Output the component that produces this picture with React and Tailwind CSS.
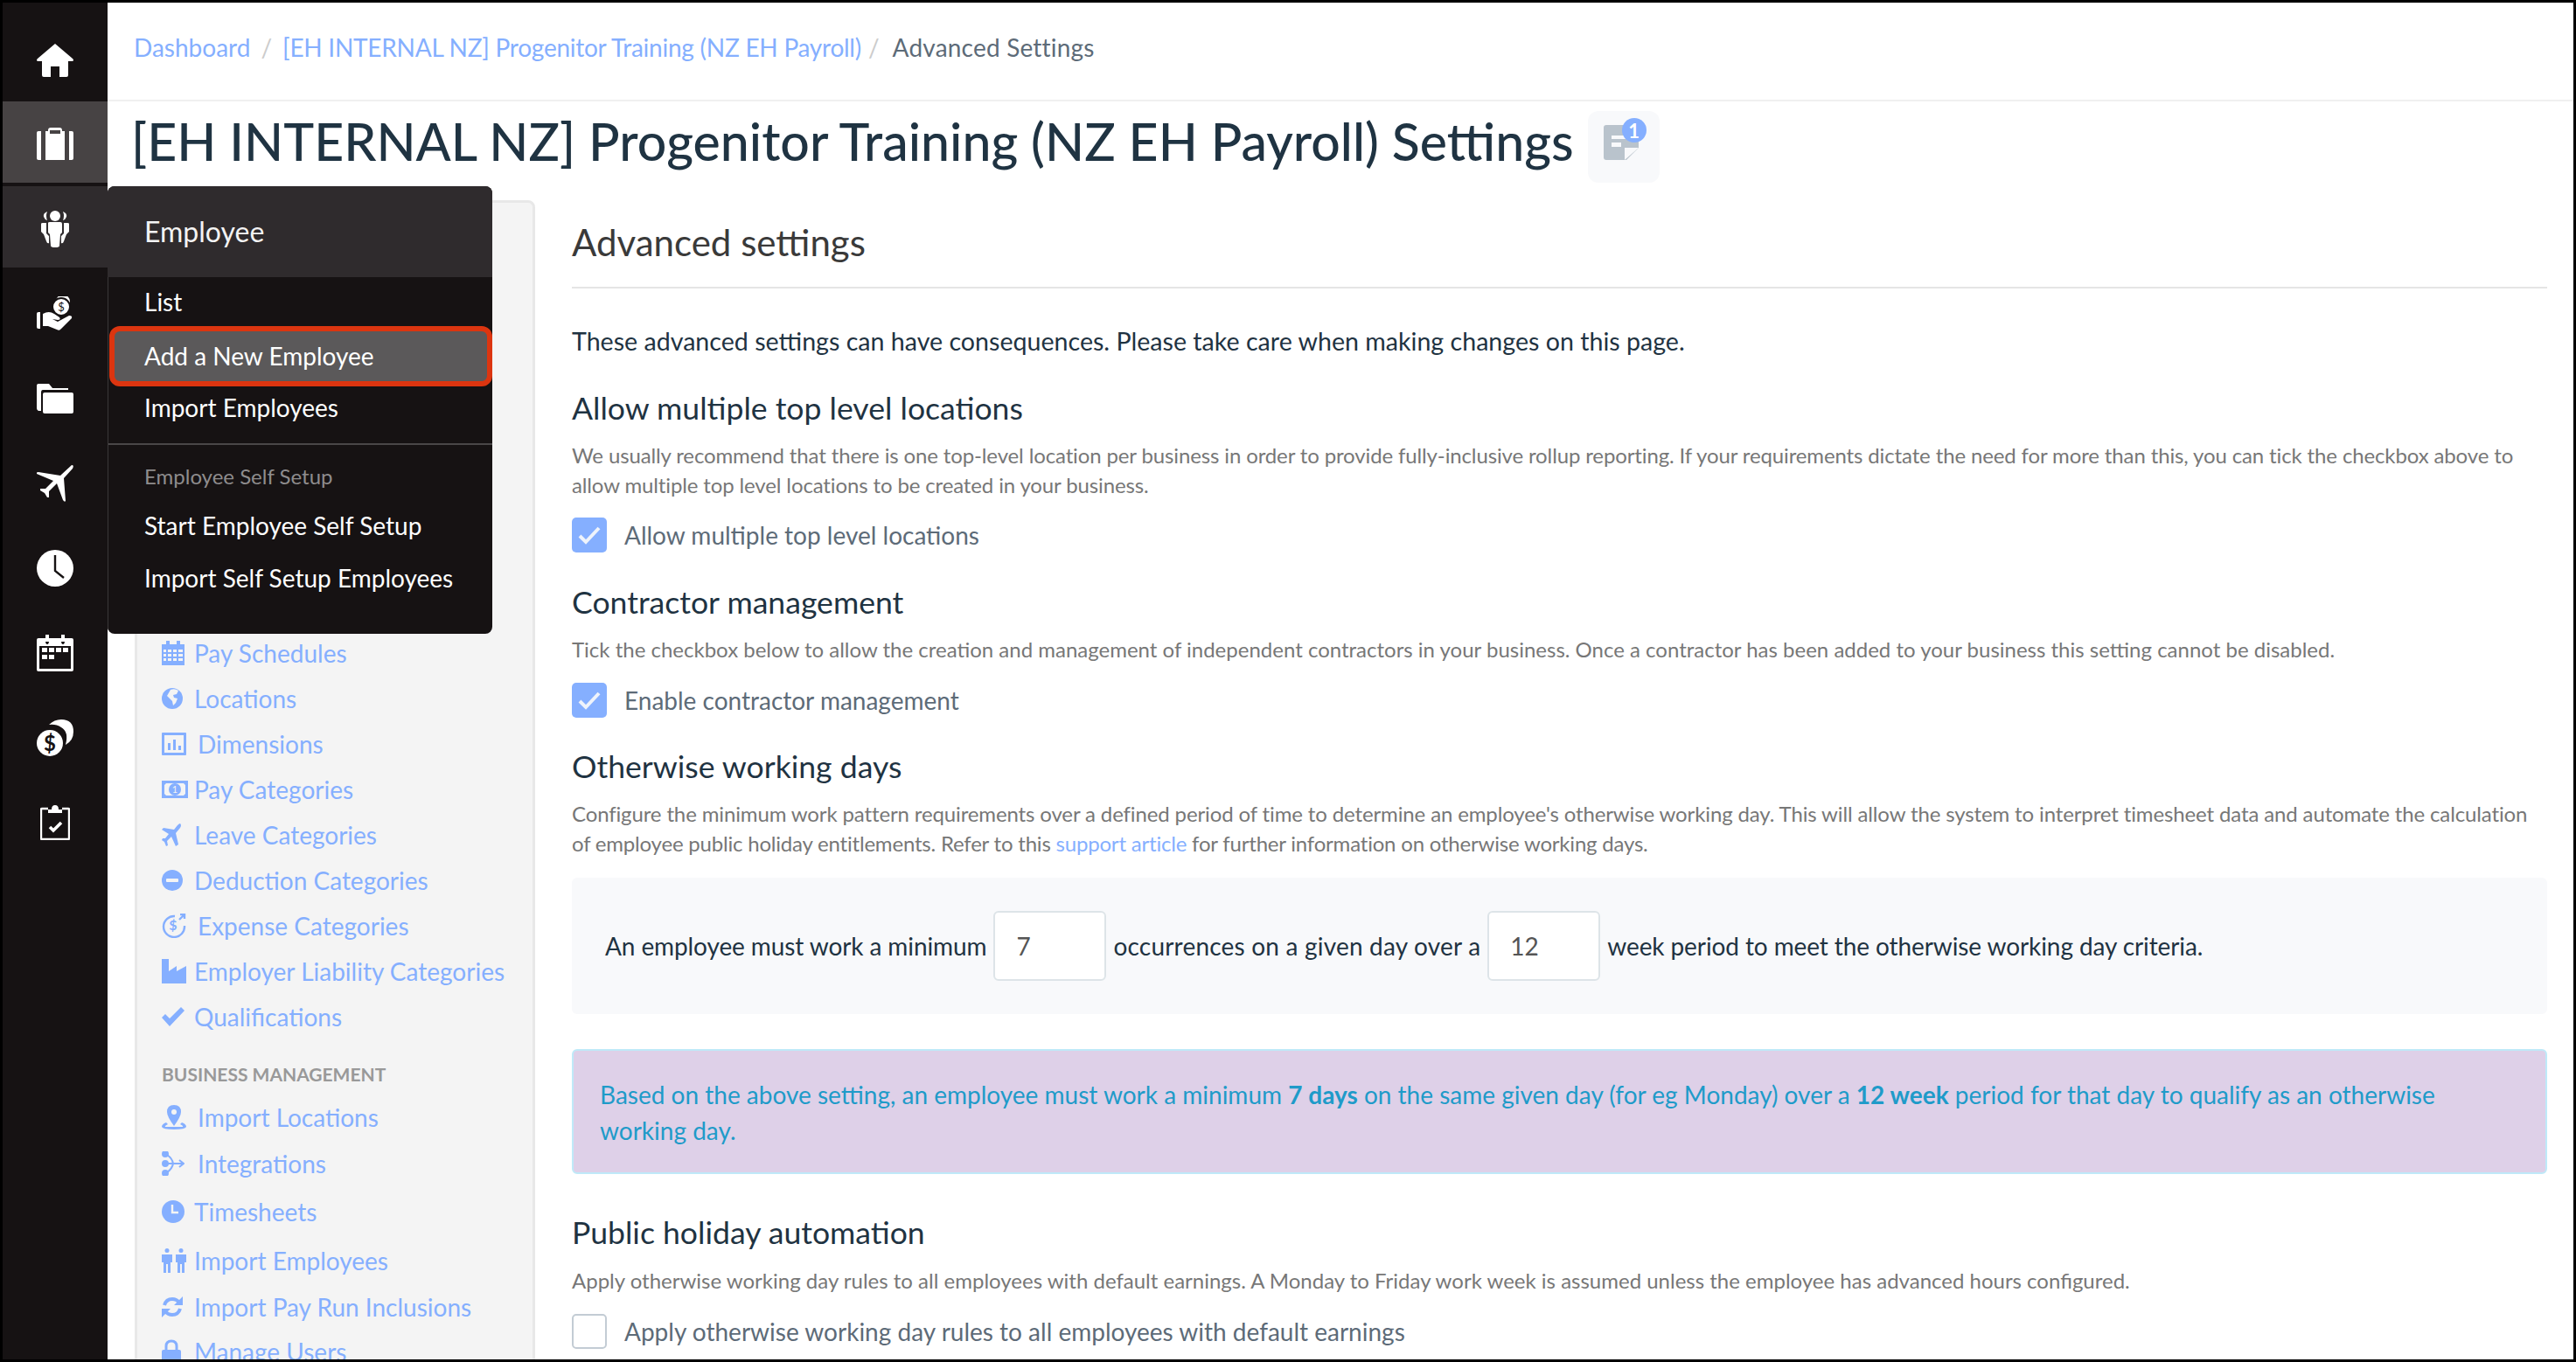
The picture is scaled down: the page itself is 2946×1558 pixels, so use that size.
const font = { fontFamily: '"Lato", "Open Sans", sans-serif' };

const navIcons = {
  home: (
    <svg width="42" height="38" viewBox="0 0 42 38" fill="white">
      <path d="M21 0 L41 17 Q43 19 41 20 L36 20 L36 36 Q36 38 34 38 L26 38 L26 26 L16 26 L16 38 L8 38 Q6 38 6 36 L6 20 L1 20 Q-1 19 1 17 Z" />
    </svg>
  ),
  briefcase: (
    <svg width="42" height="38" viewBox="0 0 42 38" fill="white">
      <path d="M0 6 Q0 4 2 4 L5 4 L5 37 L2 37 Q0 37 0 35 Z" />
      <path d="M37 4 L40 4 Q42 4 42 6 L42 35 Q42 37 40 37 L37 37 Z" />
      <path fillRule="evenodd" d="M10 4 L13 4 L13 3 Q13 0 16 0 L26 0 Q29 0 29 3 L29 4 L32 4 L32 37 L10 37 Z M15 3 L15 7 L27 7 L27 3 Z" />
    </svg>
  ),
  team: (
    <svg width="34" height="42" viewBox="0 0 34 42" fill="white">
      <circle cx="17" cy="6" r="6" />
      <path d="M8 1 Q3 3 4 7 Q5 10 8 11 Q6 6 8 1 Z M26 1 Q31 3 30 7 Q29 10 26 11 Q28 6 26 1 Z" />
      <path d="M9 14 Q9 13 11 13 L23 13 Q25 13 25 15 L25 25 L23 27 L22 40 Q22 42 17 42 Q12 42 12 40 L11 27 L9 25 Z" />
      <path d="M1 15 Q1 14 3 14 L7 14 L7 26 L10 29 L10 37 Q8 38 7 35 L4 27 L1 24 Z M33 15 Q33 14 31 14 L27 14 L27 26 L24 29 L24 37 Q26 38 27 35 L30 27 L33 24 Z" />
    </svg>
  ),
  hand: (
    <svg width="42" height="40" viewBox="0 0 42 40" fill="white">
      <circle cx="30" cy="6" r="8" />
      <circle cx="28" cy="12" r="10" stroke="#161213" strokeWidth="2" />
      <text x="28" y="17" textAnchor="middle" fontSize="13" fill="#161213" fontFamily="Lato">$</text>
      <path d="M0 20 Q0 18 2 18 L4 18 L4 37 L2 37 Q0 37 0 35 Z" />
      <path d="M7 20 Q14 16 20 20 L26 24 Q28 27 24 27 L18 26 L24 29 L37 22 Q41 22 40 25 L28 37 Q26 40 23 38 L13 34 L7 34 Z" />
    </svg>
  ),
  folder: (
    <svg width="42" height="34" viewBox="0 0 42 34" fill="white">
      <path d="M0 2 Q0 0 2 0 L14 0 L18 5 L36 5 L36 7 L7 7 Q5 7 5 10 L5 31 L2 31 Q0 30 0 28 Z" />
      <path d="M7 12 Q7 10 9 10 L40 10 Q42 10 42 12 L42 32 Q42 34 40 34 L9 34 Q7 34 7 32 Z" />
    </svg>
  ),
  plane: (
    <svg width="42" height="42" viewBox="0 0 42 42" fill="white">
      <path d="M40 0 Q43 0 41 4 L31 15 L33 41 Q32 43 30 40 L23 21 L14 30 L14 37 L12 37 L9 32 L4 29 L4 27 L10 27 L19 18 L0 10 Q-1 8 2 8 L27 12 Z" />
    </svg>
  ),
  clock: (
    <svg width="42" height="42" viewBox="0 0 42 42">
      <circle cx="21" cy="21" r="21" fill="white" />
      <path d="M21 6 L21 24 L31 32" fill="none" stroke="#161213" strokeWidth="2.4" />
    </svg>
  ),
  calendar: (
    <svg width="42" height="42" viewBox="0 0 42 42" fill="white">
      <path fillRule="evenodd" d="M2 4 L10 4 L10 7 Q10 11 12 11 Q14 11 14 7 L14 4 L28 4 L28 7 Q28 11 30 11 Q32 11 32 7 L32 4 L40 4 Q42 4 42 6 L42 40 Q42 42 40 42 L2 42 Q0 42 0 40 L0 6 Q0 4 2 4 Z M3 13 L3 39 L39 39 L39 13 Z" />
      <path d="M10 0 L14 0 L14 8 L10 8 Z M28 0 L32 0 L32 8 L28 8 Z" />
      <path d="M6 15 H12 V20 H6 Z M14 15 H20 V20 H14 Z M22 15 H28 V20 H22 Z M30 15 H36 V20 H30 Z M6 23 H12 V28 H6 Z M14 23 H20 V28 H14 Z" />
    </svg>
  ),
  coins: (
    <svg width="42" height="42" viewBox="0 0 42 42" fill="white">
      <path d="M14 6 Q20 0 28 0 Q42 0 42 14 Q42 24 33 29 Q37 14 28 9 Q22 5 14 6 Z" />
      <circle cx="15" cy="27" r="15" />
      <text x="15" y="36" textAnchor="middle" fontSize="24" fontWeight="700" fill="#161213" fontFamily="Lato">$</text>
    </svg>
  ),
  clipboard: (
    <svg width="34" height="40" viewBox="0 0 34 40" fill="none">
      <path d="M9 4 L2 4 Q1 4 1 5 L1 38 Q1 39 2 39 L32 39 Q33 39 33 38 L33 5 Q33 4 32 4 L25 4" stroke="white" strokeWidth="2.4" />
      <path d="M9 9 L9 5 L13 5 Q13 0 17 0 Q21 0 21 5 L25 5 L25 9 Z" fill="white" />
      <path d="M11 25 L15 29 L24 20" stroke="white" strokeWidth="3.6" />
    </svg>
  ),
};

const c = '#85afff';

const listIcons = {
  calendar: (
    <svg width="26" height="28" viewBox="0 0 26 28" fill={c}>
      <path fillRule="evenodd" d="M0 4 H26 V28 H0 Z M2 10 V13 H5 V10 Z M7 10 V13 H11 V10 Z M13 10 V13 H17 V10 Z M19 10 V13 H24 V10 Z M2 15 V18 H5 V15 Z M7 15 V18 H11 V15 Z M13 15 V18 H17 V15 Z M19 15 V18 H24 V15 Z M2 20 V23 H5 V20 Z M7 20 V23 H11 V20 Z M13 20 V23 H17 V20 Z M19 20 V23 H24 V20 Z" />
      <path d="M5 0 H9 V7 H5 Z M17 0 H21 V7 H17 Z" />
    </svg>
  ),
  globe: (
    <svg width="24" height="24" viewBox="0 0 24 24">
      <circle cx="12" cy="12" r="12" fill={c} />
      <path d="M10 2 Q15 0 19 3 L17 7 L13 8 L14 11 L18 12 L16 17 L13 20 L12 15 L8 11 L6 9 Z" fill="#f4f4f4" />
    </svg>
  ),
  chart: (
    <svg width="28" height="26" viewBox="0 0 28 26" fill={c}>
      <path fillRule="evenodd" d="M1 0 H27 Q28 0 28 1 V25 Q28 26 27 26 H1 Q0 26 0 25 V1 Q0 0 1 0 Z M3 3 V23 H25 V3 Z" />
      <path d="M7 12 H10 V20 H7 Z M13 8 H16 V20 H13 Z M19 15 H22 V20 H19 Z" />
    </svg>
  ),
  money: (
    <svg width="30" height="20" viewBox="0 0 30 20">
      <path d="M0 0 H30 V20 H0 Z" fill={c} />
      <path d="M5 3 H25 L27 5 V15 L25 17 H5 L3 15 V5 Z" fill="#f4f4f4" />
      <circle cx="15" cy="10" r="7" fill={c} />
      <text x="15" y="14" textAnchor="middle" fontSize="11" fill="#f4f4f4" fontFamily="Lato">1</text>
    </svg>
  ),
  plane: (
    <svg width="22" height="26" viewBox="0 0 22 26" fill={c}>
      <path d="M21 0 Q23 2 21 5 L16 11 L19 24 L16 26 L11 15 L6 20 L7 25 L5 26 L3 21 L0 19 L1 17 L4 17 L8 12 L0 7 L2 5 L14 7 L18 2 Q20 0 21 0 Z" />
    </svg>
  ),
  minus: (
    <svg width="24" height="24" viewBox="0 0 24 24">
      <circle cx="12" cy="12" r="12" fill={c} />
      <rect x="5" y="10" width="14" height="4" rx="1" fill="#f4f4f4" />
    </svg>
  ),
  expense: (
    <svg width="28" height="28" viewBox="0 0 28 28" fill="none" stroke={c} strokeWidth="2.4">
      <path d="M15 3 A12 12 0 1 0 26 14" />
      <path d="M20 7 L26 1 M21 1 H26 V6" />
      <text x="13" y="19" textAnchor="middle" fontSize="16" fontWeight="700" fill={c} stroke="none" fontFamily="Lato">$</text>
    </svg>
  ),
  factory: (
    <svg width="28" height="28" viewBox="0 0 28 28" fill={c}>
      <path d="M0 0 H8 V14 L17 8 V14 L28 8 V28 H0 Z" />
    </svg>
  ),
  check: (
    <svg width="26" height="22" viewBox="0 0 26 22" fill={c}>
      <path d="M0 12 L4 8 L9 13 L22 0 L26 4 L9 22 Z" />
    </svg>
  ),
  pin: (
    <svg width="28" height="28" viewBox="0 0 28 28">
      <path d="M14 0 Q22 0 22 8 Q22 13 14 24 Q6 13 6 8 Q6 0 14 0 Z" fill={c} />
      <circle cx="14" cy="8" r="3" fill="#f4f4f4" />
      <path d="M5 20 Q0 22 0 25 Q1 28 14 28 Q27 28 28 25 Q28 22 23 20 L21 22 Q25 24 24 25 H4 Q3 24 7 22 Z" fill={c} />
    </svg>
  ),
  integrations: (
    <svg width="26" height="28" viewBox="0 0 26 28" fill="none" stroke={c} strokeWidth="2">
      <circle cx="4" cy="3" r="3" fill={c} />
      <circle cx="4" cy="14" r="3" fill={c} />
      <circle cx="4" cy="25" r="3" fill={c} />
      <path d="M6 4 Q12 8 13 14 Q12 20 6 24 M6 14 H24 M20 10 L25 14 L20 18" />
    </svg>
  ),
  clock: (
    <svg width="26" height="26" viewBox="0 0 26 26">
      <circle cx="13" cy="13" r="13" fill={c} />
      <path d="M12 5 V14 H19" stroke="#f4f4f4" strokeWidth="2.4" fill="none" />
    </svg>
  ),
  people: (
    <svg width="28" height="28" viewBox="0 0 28 28" fill={c}>
      <circle cx="6" cy="2.5" r="2.5" />
      <circle cx="22" cy="2.5" r="2.5" />
      <path d="M0 7 H12 V16 H10 V28 H7 V18 H5 V28 H2 V16 H0 Z" />
      <path d="M16 7 H28 V16 H26 V28 H23 V18 H21 V28 H18 V16 H16 Z" />
    </svg>
  ),
  refresh: (
    <svg width="24" height="24" viewBox="0 0 24 24" fill="none" stroke={c} strokeWidth="4">
      <path d="M3 10 Q5 3 12 3 Q17 3 20 7" />
      <path d="M21 14 Q19 21 12 21 Q7 21 4 17" />
      <path d="M24 0 V10 H14 Z M0 24 V14 H10 Z" fill={c} stroke="none" />
    </svg>
  ),
  lock: (
    <svg width="22" height="28" viewBox="0 0 22 28" fill={c}>
      <path d="M5 12 V8 Q5 2 11 2 Q17 2 17 8 V12" fill="none" stroke={c} strokeWidth="3" />
      <rect x="0" y="12" width="22" height="16" rx="2" />
    </svg>
  ),
};

const settingsLinks = [
  { label: 'Pay Schedules', icon: 'calendar', pad: 'pl-[7px]' },
  { label: 'Locations', icon: 'globe', pad: 'pl-[7px]' },
  { label: 'Dimensions', icon: 'chart', pad: 'pl-[11px]' },
  { label: 'Pay Categories', icon: 'money', pad: 'pl-[7px]' },
  { label: 'Leave Categories', icon: 'plane', pad: 'pl-[7px]' },
  { label: 'Deduction Categories', icon: 'minus', pad: 'pl-[7px]' },
  { label: 'Expense Categories', icon: 'expense', pad: 'pl-[11px]' },
  { label: 'Employer Liability Categories', icon: 'factory', pad: 'pl-[7px]' },
  { label: 'Qualifications', icon: 'check', pad: 'pl-[7px]' },
];

const managementLinks = [
  { label: 'Import Locations', icon: 'pin', pad: 'pl-[11px]', h: 'h-[52px]' },
  { label: 'Integrations', icon: 'integrations', pad: 'pl-[11px]', h: 'h-[54px]' },
  { label: 'Timesheets', icon: 'clock', pad: 'pl-[7px]', h: 'h-[56px]' },
  { label: 'Import Employees', icon: 'people', pad: 'pl-[7px]', h: 'h-[56px]' },
  { label: 'Import Pay Run Inclusions', icon: 'refresh', pad: 'pl-[7px]', h: 'h-[50px]' },
  { label: 'Manage Users', icon: 'lock', pad: 'pl-[7px]', h: 'h-[52px]' },
];

function SideLink({ item }) {
  return (
    <div className={`flex items-center text-[28px] text-[#85afff] ${item.h || 'h-[52px]'}`}>
      <span className="flex items-center justify-start w-[30px] shrink-0">{listIcons[item.icon]}</span>
      <span className={`whitespace-nowrap ${item.pad}`}>{item.label}</span>
    </div>
  );
}

function Checkbox({ checked, label }) {
  return (
    <label className="flex items-center h-[40px]">
      {checked ? (
        <span className="flex items-center justify-center w-[40px] h-[40px] rounded-[5px] bg-[#85afff]">
          <svg width="26" height="22" viewBox="0 0 26 22" fill="none">
            <path d="M2 12 L9 19 L24 3" stroke="#eef3fb" strokeWidth="4" />
          </svg>
        </span>
      ) : (
        <span className="w-[40px] h-[40px] rounded-[5px] bg-white border-[2px] border-[#c3ccd4]" />
      )}
      <span className="ml-[20px] text-[28px] text-[#5d6b78]">{label}</span>
    </label>
  );
}

function SmallInput({ value }) {
  return (
    <span className="inline-flex items-center w-[129px] h-[80px] mx-[8px] pl-[24px] bg-white border-[2px] border-[#dde4e8] rounded-[6px] text-[28px] text-[#555]">
      {value}
    </span>
  );
}

function EmployeeMenu() {
  return (
    <div className="absolute left-[120px] top-[210px] w-[440px] h-[512px] z-10 bg-[#161213] rounded-[8px] overflow-hidden text-white">
      <div className="h-[104px] flex items-center pl-[42px] text-[32px] bg-[#2f2b2d] text-[#f3f3f3]">Employee</div>
      <div className="h-[408px] border-l-[1px] border-[#3a3738]">
        <div className="h-[56px] flex items-center pl-[41px] text-[28px]">List</div>
        <div className="h-[69px] ml-[1px] pb-[2px] flex items-center pl-[34px] text-[28px] bg-[#5b595a] border-[6px] border-[#dc3510] rounded-[12px]">
          Add a New Employee
        </div>
        <div className="h-[48px] flex items-center pl-[41px] text-[28px]">Import Employees</div>
        <div className="mt-[17px] border-t-[2px] border-[#4a4748] pt-[19px] pl-[41px] text-[24px] leading-[34px] text-[#8e8c8d]">
          Employee Self Setup
        </div>
        <div className="mt-[9px] h-[60px] flex items-center pl-[41px] text-[28px]">Start Employee Self Setup</div>
        <div className="h-[60px] flex items-center pl-[41px] text-[28px]">Import Self Setup Employees</div>
      </div>
    </div>
  );
}

export default function App() {
  return (
    <div style={font} className="relative w-[2946px] h-[1558px] overflow-hidden border-[3px] border-black bg-white flex">
      <aside className="w-[120px] shrink-0 bg-[#161213] flex flex-col">
        <div className="h-[113px] pt-[18px] flex items-center justify-center">{navIcons.home}</div>
        <div className="h-[93px] pt-[5px] flex items-center justify-center bg-[#474344]">{navIcons.briefcase}</div>
        <div className="h-[93px] mt-[4px] pt-[5px] flex items-center justify-center bg-[#2f2b2d]">{navIcons.team}</div>
        <div className="mt-[4px]">
          {['hand', 'folder', 'plane', 'clock', 'calendar', 'coins', 'clipboard'].map((name) => (
            <div key={name} className="h-[97px] flex items-center justify-center">
              {navIcons[name]}
            </div>
          ))}
        </div>
      </aside>

      <EmployeeMenu />

      <div className="flex-1 min-w-0 flex flex-col">
        <nav className="h-[113px] shrink-0 pb-[10px] pl-[30px] flex items-center border-b-[2px] border-[#f0f0f0] text-[28px]">
          <span className="text-[#85afff]">Dashboard</span>
          <span className="mx-[12px] text-[#ccc]">/</span>
          <span className="text-[#85afff] tracking-[-0.25px]">[EH INTERNAL NZ] Progenitor Training (NZ EH Payroll)</span>
          <span className="ml-[8px] mr-[15px] text-[#ccc]">/</span>
          <span className="text-[#5d6b78] tracking-[0.2px]">Advanced Settings</span>
        </nav>

        <div className="h-[113px] shrink-0 pl-[27px] flex items-start">
          <h1 className="mt-[11px] text-[59px] leading-[70px] font-medium text-[#1f3342] whitespace-nowrap">
            [EH INTERNAL NZ] Progenitor Training (NZ EH Payroll) Settings
          </h1>
          <div className="relative ml-[16px] mt-[11px] w-[82px] h-[82px] rounded-[12px] bg-[#f8f9fb]">
            <svg className="absolute left-[18px] top-[16px]" width="40" height="40" viewBox="0 0 40 40">
              <path d="M3 0 H40 V26 L26 40 H3 Q0 40 0 37 V3 Q0 0 3 0 Z" fill="#b9c3cc" />
              <path d="M9 12 H26 V16 H9 Z M9 20 H20 V25 H9 Z" fill="#f8f9fb" />
              <path d="M24 40 L24 26 L40 26 Z" fill="#f8f9fb" />
            </svg>
            <span className="absolute left-[39px] top-[8px] w-[28px] h-[28px] rounded-full bg-[#85afff] text-white text-[22px] font-bold flex items-center justify-center">
              1
            </span>
          </div>
        </div>

        <div className="flex-1 min-h-0 flex items-start">
          <div className="ml-[31px] w-[458px] h-[1400px] shrink-0 bg-[#f4f4f4] border-[3px] border-[#e8e8e8] rounded-t-[8px] pt-[489px] pl-[28px]">
            {settingsLinks.map((item) => (
              <SideLink key={item.label} item={item} />
            ))}
            <div className="mt-[25px] mb-[8px] h-[30px] flex items-center text-[21px] font-bold text-[#999]">BUSINESS MANAGEMENT</div>
            {managementLinks.map((item) => (
              <SideLink key={item.label} item={item} />
            ))}
          </div>

          <main className="ml-[42px] mr-[30px] flex-1 min-w-0">
            <h2 className="mt-[23px] pb-[26px] border-b-[2px] border-[#e5e5e5] text-[42px] leading-[50px] text-[#3a3a3a]">Advanced settings</h2>
            <p className="mt-[40px] text-[28.6px] leading-[40px] text-[#1f3342]">
              These advanced settings can have consequences. Please take care when making changes on this page.
            </p>

            <h3 className="mt-[35px] text-[35.6px] leading-[44px] text-[#1f3342]">Allow multiple top level locations</h3>
            <p className="mt-[15px] text-[24px] leading-[34px] text-[#777] tracking-[-0.13px]">
              We usually recommend that there is one top-level location per business in order to provide fully-inclusive rollup reporting. If your requirements dictate the need for more than this, you can tick the checkbox above to allow multiple top level locations to be created in your business.
            </p>
            <div className="mt-[20px]">
              <Checkbox checked label="Allow multiple top level locations" />
            </div>

            <h3 className="mt-[35px] text-[35.6px] leading-[44px] text-[#1f3342]">Contractor management</h3>
            <p className="mt-[15px] text-[24px] leading-[34px] text-[#777]">
              Tick the checkbox below to allow the creation and management of independent contractors in your business. Once a contractor has been added to your business this setting cannot be disabled.
            </p>
            <div className="mt-[21px]">
              <Checkbox checked label="Enable contractor management" />
            </div>

            <h3 className="mt-[34px] text-[35.6px] leading-[44px] text-[#1f3342]">Otherwise working days</h3>
            <p className="mt-[15px] text-[24px] leading-[34px] text-[#777]">
              <span className="tracking-[-0.13px]">
                Configure the minimum work pattern requirements over a defined period of time to determine an employee's otherwise working day. This will allow the system to interpret timesheet data and automate the calculation
              </span>
              <br />
              <span className="tracking-[-0.2px]">
                of employee public holiday entitlements. Refer to this <span className="text-[#85afff]">support article</span> for further information on otherwise working days.
              </span>
            </p>

            <div className="mt-[22px] h-[156px] pl-[38px] flex items-center bg-[#f8f9fb] rounded-[6px] text-[28px] text-[#1f3342]">
              <span className="tracking-[-0.1px]">An employee must work a minimum</span>
              <SmallInput value="7" />
              <span className="tracking-[0.2px]">occurrences on a given day over a</span>
              <SmallInput value="12" />
              <span className="tracking-[-0.1px]">week period to meet the otherwise working day criteria.</span>
            </div>

            <div className="mt-[40px] h-[143px] px-[30px] pt-[2px] flex items-center bg-[#ded0e8] border-[2px] border-[#bfe9f8] rounded-[6px] text-[28px] leading-[41px] text-[#1f9bc9]">
              <p>
                Based on the above setting, an employee must work a minimum <b>7 days</b> on the same given day (for eg Monday) over a <b>12 week</b> period for that day to qualify as an otherwise working day.
              </p>
            </div>

            <h3 className="mt-[45px] text-[35.6px] leading-[44px] text-[#1f3342]">Public holiday automation</h3>
            <p className="mt-[16px] text-[24px] leading-[34px] text-[#777]">
              Apply otherwise working day rules to all employees with default earnings. A Monday to Friday work week is assumed unless the employee has advanced hours configured.
            </p>
            <div className="mt-[21px]">
              <Checkbox label="Apply otherwise working day rules to all employees with default earnings" />
            </div>
          </main>
        </div>
      </div>
    </div>
  );
}
